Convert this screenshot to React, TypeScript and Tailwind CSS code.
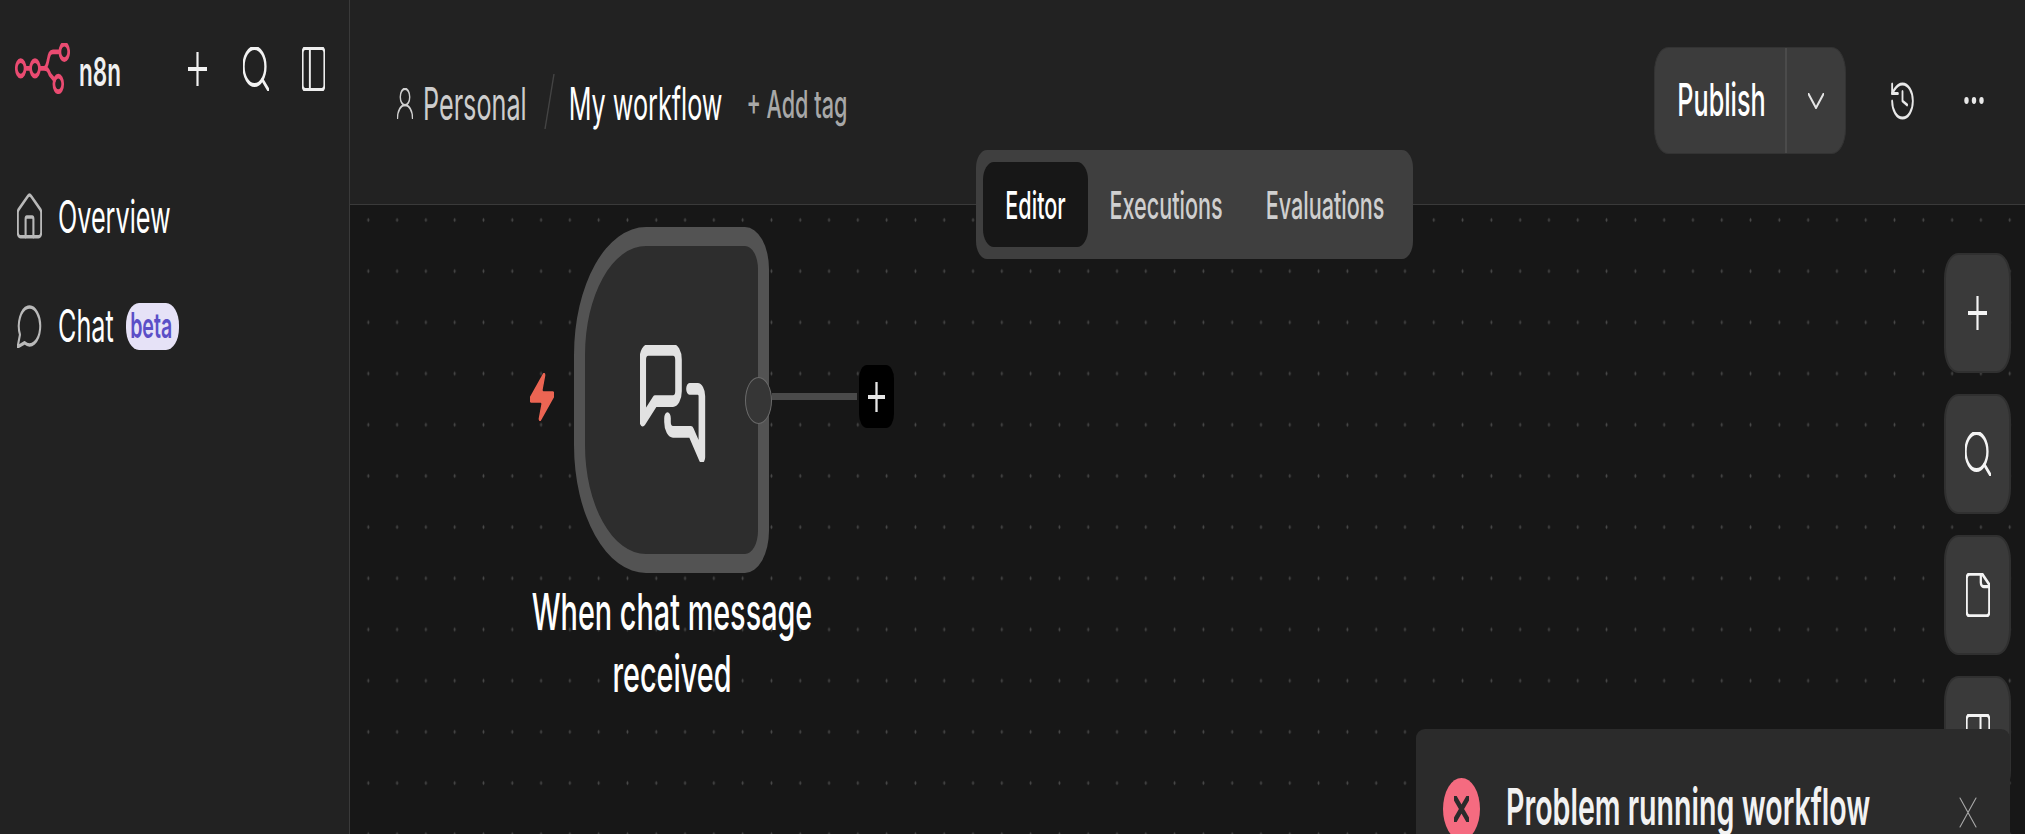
import React from "react";

type IconProps = {
  w: number;
  h: number;
  vb?: string;
  sw?: number;
  color?: string;
  className?: string;
  children: React.ReactNode;
};

function Icon({ w, h, vb = "0 0 24 24", sw = 2, color = "currentColor", className = "", children }: IconProps) {
  return (
    <svg
      width={w}
      height={h}
      viewBox={vb}
      preserveAspectRatio="none"
      fill="none"
      stroke={color}
      strokeWidth={sw}
      strokeLinecap="round"
      strokeLinejoin="round"
      className={`shrink-0 ${className}`}
    >
      {children}
    </svg>
  );
}

const PlusPaths = () => <path d="M5 12h14M12 5v14" />;
const SearchPaths = () => (
  <>
    <circle cx="11" cy="11" r="8" />
    <path d="m21 21-4.3-4.3" />
  </>
);
const PanelLeftPaths = () => (
  <>
    <rect x="3" y="3" width="18" height="18" rx="2" />
    <path d="M9 3v18" />
  </>
);
const PanelRightPaths = () => (
  <>
    <rect x="3" y="3" width="18" height="18" rx="2" />
    <path d="M14 3v18" />
  </>
);

function Logo() {
  return (
    <svg width={55} height={51} viewBox="0 0 55 29" preserveAspectRatio="none" fill="none" stroke="#ea4b71" strokeWidth={2.7} strokeLinecap="round" className="shrink-0">
      <circle cx="5.7" cy="14.4" r="4.4" />
      <circle cx="20" cy="14.4" r="4.4" />
      <circle cx="49.3" cy="5" r="4.4" />
      <circle cx="43.3" cy="23.3" r="4.4" />
      <path d="M10.2 14.4H15.5M24.5 14.4H29C31 14.4 32 13 33 10C34 6.5 35 5 38 5H44.8M29 14.4C32 14.4 33 15 35 18L39.5 21" />
    </svg>
  );
}

function Tall({ className = "", children }: { className?: string; children: React.ReactNode }) {
  return <span className={`inline-block origin-center scale-y-[1.78] whitespace-nowrap ${className}`}>{children}</span>;
}

function ToolButton({ children }: { children: React.ReactNode }) {
  return (
    <div className="flex h-[120px] w-[67px] shrink-0 items-center justify-center rounded-[14px/25px] border-2 border-[#303030] bg-[#3a3a3a] text-white">
      {children}
    </div>
  );
}

function Sidebar() {
  return (
    <aside className="flex h-full w-[350px] shrink-0 flex-col border-r border-[#3a3a3a] bg-[#222222]">
      <div className="flex h-[137px] items-center pl-[15px]">
        <Logo />
        <Tall className="ml-[9px] mt-[6px] w-[45px] text-[22.5px] leading-[30px] font-semibold text-[#f0f0f0]">n8n</Tall>
        <Icon w={19} h={34} vb="5 5 14 14" sw={1.6} color="#f2f2f2" className="ml-[64px]"><PlusPaths /></Icon>
        <Icon w={26} h={44} vb="2.6 2.6 19 19" sw={1.7} color="#f2f2f2" className="ml-[36px]"><SearchPaths /></Icon>
        <Icon w={23} h={44} vb="2.5 2.5 19 19" sw={1.6} color="#eeeeee" className="ml-[33px]"><PanelLeftPaths /></Icon>
      </div>
      <nav className="mt-[24px] flex flex-col pl-[17px]">
        <div className="flex h-[110px] items-center text-white">
          <Icon w={25} h={46} vb="2.4 1 19.2 21" sw={1.6} color="#b9b9b9">
            <path d="M15 21v-8a1 1 0 0 0-1-1h-4a1 1 0 0 0-1 1v8" />
            <path d="M3 10a2 2 0 0 1 .709-1.528l7-6a2 2 0 0 1 2.582 0l7 6A2 2 0 0 1 21 10v9a2 2 0 0 1-2 2H5a2 2 0 0 1-2-2z" />
          </Icon>
          <Tall className="ml-[16px] mt-[2px] text-[25.2px] leading-[30px]">Overview</Tall>
        </div>
        <div className="flex h-[110px] items-center text-white">
          <Icon w={25} h={44} vb="1.5 1.5 21 21" sw={1.7} color="#b9b9b9">
            <path d="M7.9 20A9 9 0 1 0 4 16.1L2 22Z" />
          </Icon>
          <Tall className="ml-[16px] text-[25.2px] leading-[30px]">Chat</Tall>
          <div className="ml-[12px] flex h-[47px] w-[53px] items-center justify-center rounded-[13px/22px] bg-[#e6e2f7] text-[#5b4fc7]">
            <Tall className="mr-[2px] text-[19.6px] leading-[22px] font-semibold">beta</Tall>
          </div>
        </div>
      </nav>
    </aside>
  );
}

function Header() {
  return (
    <header className="flex h-[205px] shrink-0 items-center border-b border-[#3a3a3a] bg-[#222222] pb-[3px] pl-[47px] pr-[41px]">
      <div className="mt-[6px] flex items-center">
        <Icon w={16} h={31} vb="3.5 2.5 17 19" sw={1.5} color="#cfcfcf">
          <circle cx="12" cy="8" r="5" />
          <path d="M20 21a8 8 0 0 0-16 0" />
        </Icon>
        <Tall className="ml-[10px] text-[25.2px] leading-[30px] text-[#cdcdcd]">Personal</Tall>
        <svg width={11} height={57} viewBox="0 0 11 57" fill="none" stroke="#444444" strokeWidth={1.4} className="ml-[17px] mt-[-4px] shrink-0">
          <path d="M10 1L1 56" />
        </svg>
        <Tall className="ml-[14px] text-[25.2px] leading-[30px] text-white">My workflow</Tall>
        <Tall className="ml-[24px] text-[21.6px] leading-[28px] font-medium text-[#a8a8a8]">+ Add tag</Tall>
      </div>
      <div className="ml-auto flex h-[107px] w-[192px] overflow-hidden rounded-[14px/25px] border border-[#333333] bg-[#3c3c3c]">
        <div className="flex w-[132px] items-center justify-center border-r-2 border-[#4b4b4b] pl-[3px] text-white">
          <Tall className="mt-[-2px] text-[25.2px] leading-[30px] font-medium">Publish</Tall>
        </div>
        <div className="flex flex-1 items-center justify-center">
          <Icon w={16} h={16} vb="5.5 8.5 13 7" sw={1.3} color="#e4e4e4"><path d="m6 9 6 6 6-6" /></Icon>
        </div>
      </div>
      <Icon w={23} h={38} vb="2 2 20 20" sw={1.6} color="#e8e8e8" className="ml-[45px]">
        <path d="M3 12a9 9 0 1 0 9-9 9.75 9.75 0 0 0-6.74 2.74L3 8" />
        <path d="M3 3v5h5" />
        <path d="M12 7v5l4 2" />
      </Icon>
      <svg width={20} height={9} viewBox="0 0 20 9" fill="#e8e8e8" className="ml-[50px] shrink-0">
        <ellipse cx="2.5" cy="4.5" rx="2.2" ry="3.4" />
        <ellipse cx="10" cy="4.5" rx="2.2" ry="3.4" />
        <ellipse cx="17.5" cy="4.5" rx="2.2" ry="3.4" />
      </svg>
    </header>
  );
}

function Tabs() {
  return (
    <div className="absolute left-[626px] top-[150px] flex h-[109px] items-center rounded-[11px/18px] bg-[#3f3f3f] pl-[7px] pr-[7px] text-[#cfcfcf]">
      <div className="flex h-[85px] w-[105px] items-center justify-center rounded-[11px/18px] bg-[#171717] text-white">
        <Tall className="text-[21.6px] leading-[28px] font-medium">Editor</Tall>
      </div>
      <div className="flex h-[85px] w-[156px] items-center justify-center">
        <Tall className="text-[21.6px] leading-[28px] font-medium">Executions</Tall>
      </div>
      <div className="flex h-[85px] w-[162px] items-center justify-center">
        <Tall className="text-[21.6px] leading-[28px] font-medium">Evaluations</Tall>
      </div>
    </div>
  );
}

function WorkflowNode() {
  return (
    <div className="absolute left-[180px] top-[22px] flex items-start">
      <div className="mt-[146px] w-[44px] shrink-0">
        <svg width={24} height={48} viewBox="3 1.6 18 20.8" preserveAspectRatio="none" fill="#ec6553" stroke="#ec6553" strokeWidth={1} strokeLinejoin="round">
          <path d="M4 14a1 1 0 0 1-.78-1.63l9.9-10.2a.5.5 0 0 1 .86.46l-1.92 6.02A1 1 0 0 0 13 10h7a1 1 0 0 1 .78 1.63l-9.9 10.2a.5.5 0 0 1-.86-.46l1.92-6.02A1 1 0 0 0 11 14z" />
        </svg>
      </div>
      <div className="relative flex h-[346px] w-[195px] shrink-0 items-center justify-center rounded-[72px_24px_24px_72px/128px_42px_42px_128px] border-x-[11px] border-y-[19px] border-[#535353] bg-[#2d2d2d]">
        <svg width={66} height={117} viewBox="0 0 24 24" preserveAspectRatio="none" fill="none" stroke="#e2e2e2" strokeWidth={2.4} strokeLinecap="round" strokeLinejoin="round" className="mr-[-2px] mt-[7px]">
          <path d="M1 15.5V3a2 2 0 0 1 2-2h9a2 2 0 0 1 2 2v6.5a2 2 0 0 1-2 2H5.5Z" />
          <path d="M18 9h3a1.5 1.5 0 0 1 1.5 1.5V23L18.5 17.8H12a2 2 0 0 1-2-2V15" />
        </svg>
        <div className="absolute right-[-14px] top-[131px] h-[47px] w-[27px] rounded-[50%] border border-[#6a6a6a] bg-[#363636]" />
      </div>
      <div className="mt-[138px] flex items-center">
        <div className="ml-[3px] h-[7px] w-[85px] bg-[#4a4a4a]" />
        <div className="ml-[2px] flex h-[63px] w-[35px] items-center justify-center rounded-[8px/14px] bg-black">
          <Icon w={17} h={30} vb="5 5 14 14" sw={1.9} color="#e6e6e6"><PlusPaths /></Icon>
        </div>
      </div>
    </div>
  );
}

function NodeLabel() {
  return (
    <div className="absolute left-[152px] top-[376px] flex w-[340px] flex-col items-center text-white">
      <div className="flex h-[62px] items-center"><Tall className="text-[28.8px] leading-[34px] font-medium">When chat message</Tall></div>
      <div className="flex h-[62px] items-center"><Tall className="text-[28.8px] leading-[34px] font-medium">received</Tall></div>
    </div>
  );
}

function ToolStack() {
  return (
    <div className="absolute right-[14px] top-[48px] flex flex-col gap-[21px]">
      <ToolButton><Icon w={19} h={34} vb="5 5 14 14" sw={1.6} color="#f4f4f4"><PlusPaths /></Icon></ToolButton>
      <ToolButton><Icon w={26} h={44} vb="2.6 2.6 19 19" sw={1.7} color="#f4f4f4"><SearchPaths /></Icon></ToolButton>
      <ToolButton>
        <Icon w={24} h={44} vb="3.5 1.5 17 21" sw={1.6} color="#f4f4f4">
          <path d="M15 2H6a2 2 0 0 0-2 2v16a2 2 0 0 0 2 2h12a2 2 0 0 0 2-2V7Z" />
          <path d="M14 2v4a2 2 0 0 0 2 2h4" />
        </Icon>
      </ToolButton>
      <ToolButton><Icon w={24} h={44} vb="2.5 2.5 19 19" sw={1.6} color="#f4f4f4"><PanelRightPaths /></Icon></ToolButton>
    </div>
  );
}

function Toast() {
  return (
    <div className="absolute left-[1066px] top-[524px] flex h-[140px] w-[594px] items-start rounded-t-[9px] bg-[#2b2b2b] pl-[27px] pr-[33px] pt-[49px]">
      <div className="flex h-[62px] w-[37px] shrink-0 items-center justify-center rounded-[50%] bg-[#f56b80]">
        <Icon w={15} h={26} vb="6 6 12 12" sw={3} color="#2b2b2b"><path d="M7 7l10 10M17 7L7 17" /></Icon>
      </div>
      <div className="ml-[26px] mt-[3px] flex h-[52px] items-center">
        <Tall className="text-[28.6px] leading-[34px] font-semibold text-[#f2f2f2]">Problem running workflow</Tall>
      </div>
      <Icon w={18} h={31} vb="0 0 18 31" sw={1.1} color="#a9a9a9" className="ml-auto mt-[19px]"><path d="M1 1L17 30M17 1L1 30" /></Icon>
    </div>
  );
}

export default function App() {
  return (
    <div className="flex h-[834px] w-[2025px] overflow-hidden bg-[#171717] font-['Inter','Noto_Sans',sans-serif]">
      <Sidebar />
      <main className="relative flex h-full min-w-0 flex-1 flex-col">
        <Header />
        <section className="relative flex-1 overflow-hidden bg-[#171717] bg-[radial-gradient(ellipse_1.3px_2.6px_at_center,#4a4a4a_40%,transparent_100%)] bg-[size:28.8px_51.2px] bg-[position:3.9px_-10.6px]">
          <WorkflowNode />
          <NodeLabel />
          <ToolStack />
          <Toast />
        </section>
        <Tabs />
      </main>
    </div>
  );
}
